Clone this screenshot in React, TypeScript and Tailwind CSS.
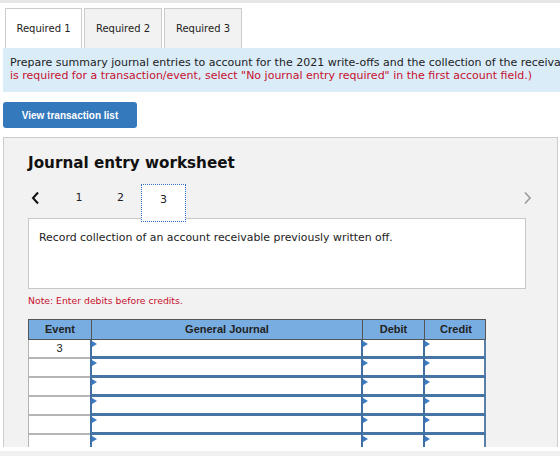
import React from "react";

const verdana = { fontFamily: '"DejaVu Sans", Verdana, sans-serif' };
const arial = { fontFamily: '"Liberation Sans", Arial, sans-serif' };

function Marker() {
  return (
    <span className="absolute left-0 top-[1px] h-0 w-0 border-y-[3px] border-l-[5px] border-y-transparent border-l-[#3b7bc4]" />
  );
}

function Row({ event }: { event?: string }) {
  return (
    <div className="grid h-[19px] grid-cols-[62px_271px_62px_63px]">
      <div
        className="flex items-center justify-center border-b-2 border-l border-b-[#b5b5b5] border-l-[#b5b5b5] bg-white text-[11px] text-[#222]"
        style={arial}
      >
        {event}
      </div>
      <div className="relative border-b-[3px] border-l-2 border-b-[#4674a4] border-l-[#3f6fa3] bg-white">
        <Marker />
      </div>
      <div className="relative border-b-[3px] border-l-2 border-b-[#4674a4] border-l-[#3f6fa3] bg-white">
        <Marker />
      </div>
      <div className="relative border-b-[3px] border-l-2 border-r-2 border-b-[#4674a4] border-l-[#3f6fa3] border-r-[#5a7fa8] bg-white">
        <Marker />
      </div>
    </div>
  );
}

export default function App() {
  const tabs = ["Required 1", "Required 2", "Required 3"];
  return (
    <div className="h-[456px] w-[560px] overflow-hidden bg-white" style={verdana}>
      <div className="h-[3px] bg-[#e6e6e6]" />
      <div className="ml-[5px] mt-[5px] flex gap-[2px]">
        {tabs.map((t, i) => (
          <div
            key={t}
            className={
              i === 0
                ? "flex h-[40px] w-[77px] items-center justify-center border border-b-0 border-[#cccccc] bg-white text-[10px] text-[#222]"
                : "flex h-[40px] w-[78px] items-center justify-center border border-b-0 border-[#cccccc] bg-[#f2f2f2] text-[10px] text-[#222]"
            }
          >
            {t}
          </div>
        ))}
      </div>
      <div className="ml-[3px] h-[44px] w-[640px] whitespace-nowrap bg-[#d9ecf8] pl-[7px] pt-[8px] text-[11px] leading-[13px]">
        <div className="text-[#222]">
          Prepare summary journal entries to account for the 2021 write-offs and the collection of the receivable.
        </div>
        <div className="text-[#c8102e]">
          is required for a transaction/event, select "No journal entry required" in the first account field.)
        </div>
      </div>
      <div className="ml-[3px] mt-[10px]">
        <button
          className="flex h-[26px] w-[134px] items-center justify-center rounded-[3px] bg-[#3479bc] text-[10px] font-bold text-white"
          style={arial}
        >
          View transaction list
        </button>
      </div>
      <div className="ml-[3px] mt-[9px] h-[310px] w-[555px] overflow-hidden border border-b-0 border-[#cccccc] bg-[#f2f2f2] pl-[24px] pt-[16px]">
        <div className="text-[15.2px] font-bold leading-[18px] text-[#111]">Journal entry worksheet</div>
        <div className="mt-[12px] flex h-[34px] w-[506px] items-start">
          <div className="flex h-[28px] w-[30px] items-center pl-[3px]">
            <svg width="9" height="14" viewBox="0 0 9 14">
              <path d="M7 1.5 L2 7 L7 12.5" fill="none" stroke="#111" strokeWidth="2" />
            </svg>
          </div>
          <div className="flex h-[28px] w-[42px] items-center justify-center text-[11px] text-[#222]">1</div>
          <div className="flex h-[28px] w-[41px] items-center justify-center text-[11px] text-[#222]">2</div>
          <div className="relative z-10 flex h-[38px] w-[45px] items-start justify-center border border-dotted border-[#2a6fc0] bg-white pt-[7px] text-[11px] text-[#222]">
            3
          </div>
          <div className="flex-1" />
          <div className="flex h-[28px] w-[14px] items-center justify-center">
            <svg width="9" height="14" viewBox="0 0 9 14">
              <path d="M2 1.5 L7 7 L2 12.5" fill="none" stroke="#9a9a9a" strokeWidth="1.6" />
            </svg>
          </div>
        </div>
        <div className="h-[71px] w-[498px] border border-[#c8c8c8] bg-white px-[10px] pt-[12px] text-[10.9px] leading-[13px] text-[#222]">
          Record collection of an account receivable previously written off.
        </div>
        <div className="mt-[6px] text-[9.3px] leading-[12px] text-[#c8102e]">Note: Enter debits before credits.</div>
        <div className="mt-[12px] w-[458px]" style={arial}>
          <div className="grid h-[21px] grid-cols-[62px_271px_62px_63px] border border-[#555] bg-[#78ade1] text-[11px] font-bold text-[#222]">
            <div className="flex items-center justify-center">Event</div>
            <div className="flex items-center justify-center border-l border-[#555]">General Journal</div>
            <div className="flex items-center justify-center border-l border-[#555]">Debit</div>
            <div className="flex items-center justify-center border-l border-[#555]">Credit</div>
          </div>
          <Row event="3" />
          <Row />
          <Row />
          <Row />
          <Row />
          <Row />
          <Row />
        </div>
      </div>
      <div className="mt-[4px] h-[5px] bg-[#f0f0f0]" />
    </div>
  );
}
